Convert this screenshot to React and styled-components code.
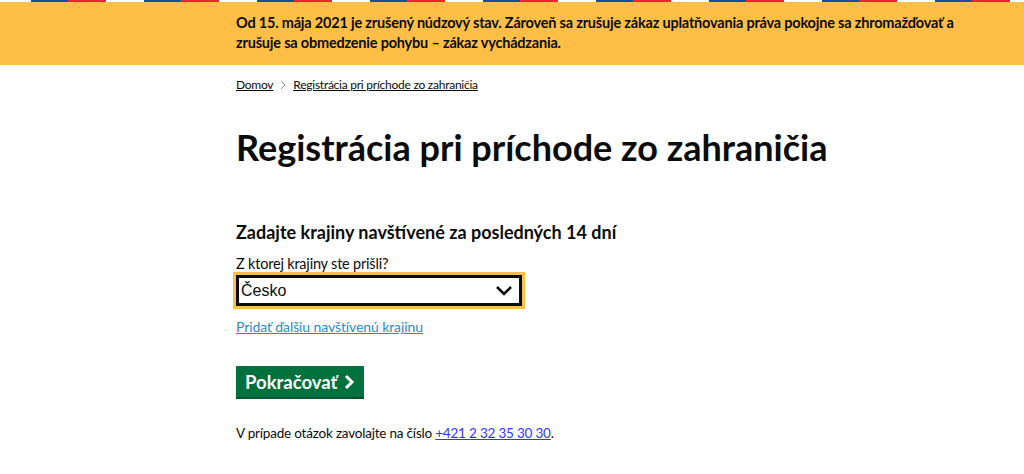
import React from "react";
import styled, { createGlobalStyle } from "styled-components";

const Global = createGlobalStyle`
	html, body {
		margin: 0;
		padding: 0;
		background: #fff;
	}
	body {
		font-family: Lato, "Noto Sans", sans-serif;
		color: #0b0c0c;
	}
`;

const Stripe = styled.div`
	height: 2px;
	background: repeating-linear-gradient(
		90deg,
		#ffffff 0 38px,
		#1f4a9e 38px 75px,
		#e6282b 75px 113px
	);
	background-position: -7px 0;
`;

const Banner = styled.div`
	background: #ffbf47;
	padding: 11px 0 12px;
`;

const Wrap = styled.div`
	width: 760px;
	margin: 0 0 0 236px;
`;

const BannerText = styled.p`
	margin: 0;
	font-weight: 700;
	font-size: 14.5px;
	letter-spacing: -0.2px;
	line-height: 20px;
`;

const Crumbs = styled.nav`
	display: flex;
	align-items: center;
	gap: 7px;
	padding-top: 11px;
	font-size: 12px;
	letter-spacing: -0.25px;
	line-height: 18px;
`;

const Crumb = styled.a`
	color: #0b0c0c;
	text-decoration: underline;
`;

const Sep = styled.svg`
	width: 6px;
	height: 10px;
`;

const Title = styled.h1`
	margin: 31px 0 0;
	font-size: 36px;
	line-height: 44px;
	font-weight: 700;
`;

const Subtitle = styled.h2`
	margin: 50px 0 0;
	font-size: 18px;
	line-height: 26px;
	font-weight: 700;
`;

const Label = styled.label`
	display: block;
	margin-top: 9px;
	font-size: 14.5px;
	letter-spacing: -0.2px;
	line-height: 20px;
`;

const SelectBox = styled.div`
	box-sizing: border-box;
	margin-top: 1px;
	width: 286px;
	height: 31px;
	border: 3px solid #0b0c0c;
	box-shadow: 0 0 0 3px #ffbf47;
	display: flex;
	align-items: center;
	justify-content: space-between;
	padding: 0 6px 0 2px;
	font-family: "Liberation Sans", Arial, sans-serif;
	font-size: 16px;
`;

const AddLink = styled.a`
	display: block;
	width: fit-content;
	margin-top: 11px;
	color: #2b8cc4;
	font-size: 14px;
	letter-spacing: -0.1px;
	line-height: 20px;
	text-decoration: underline;
`;

const Button = styled.button`
	display: flex;
	align-items: center;
	gap: 6px;
	margin-top: 29px;
	height: 33px;
	padding: 0 9px;
	background: #00703c;
	color: #fff;
	border: none;
	border-bottom: 2px solid #00542d;
	font-family: Lato, "Noto Sans", sans-serif;
	font-weight: 700;
	font-size: 18.5px;
`;

const Foot = styled.p`
	margin: 24px 0 0;
	font-size: 13.5px;
	letter-spacing: -0.2px;
	line-height: 20px;
`;

const Phone = styled.a`
	color: #3434ff;
	text-decoration: underline;
`;

export default function App() {
	return (
		<>
			<Global />
			<Stripe />
			<Banner>
				<Wrap>
					<BannerText>
						Od 15. mája 2021 je zrušený núdzový stav. Zároveň sa zrušuje zákaz
						uplatňovania práva pokojne sa zhromažďovať a zrušuje sa obmedzenie
						pohybu – zákaz vychádzania.
					</BannerText>
				</Wrap>
			</Banner>
			<Wrap>
				<Crumbs>
					<Crumb href="#">Domov</Crumb>
					<Sep viewBox="0 0 6 10">
						<path d="M1 1 L5 5 L1 9" fill="none" stroke="#8a8c8c" strokeWidth="1" />
					</Sep>
					<Crumb href="#">Registrácia pri príchode zo zahraničia</Crumb>
				</Crumbs>
				<Title>Registrácia pri príchode zo zahraničia</Title>
				<Subtitle>Zadajte krajiny navštívené za posledných 14 dní</Subtitle>
				<Label>Z ktorej krajiny ste prišli?</Label>
				<SelectBox>
					<span>Česko</span>
					<svg width="18" height="11" viewBox="0 0 18 11">
						<path d="M2 2 L9 9 L16 2" fill="none" stroke="#0b0c0c" strokeWidth="2.6" />
					</svg>
				</SelectBox>
				<AddLink href="#">Pridať ďalšiu navštívenú krajinu</AddLink>
				<Button>
					Pokračovať
					<svg width="12" height="16" viewBox="0 0 12 16">
						<path d="M3 2 L9 8 L3 14" fill="none" stroke="#fff" strokeWidth="3" />
					</svg>
				</Button>
				<Foot>
					V prípade otázok zavolajte na číslo <Phone href="#">+421 2 32 35 30 30</Phone>.
				</Foot>
			</Wrap>
		</>
	);
}
